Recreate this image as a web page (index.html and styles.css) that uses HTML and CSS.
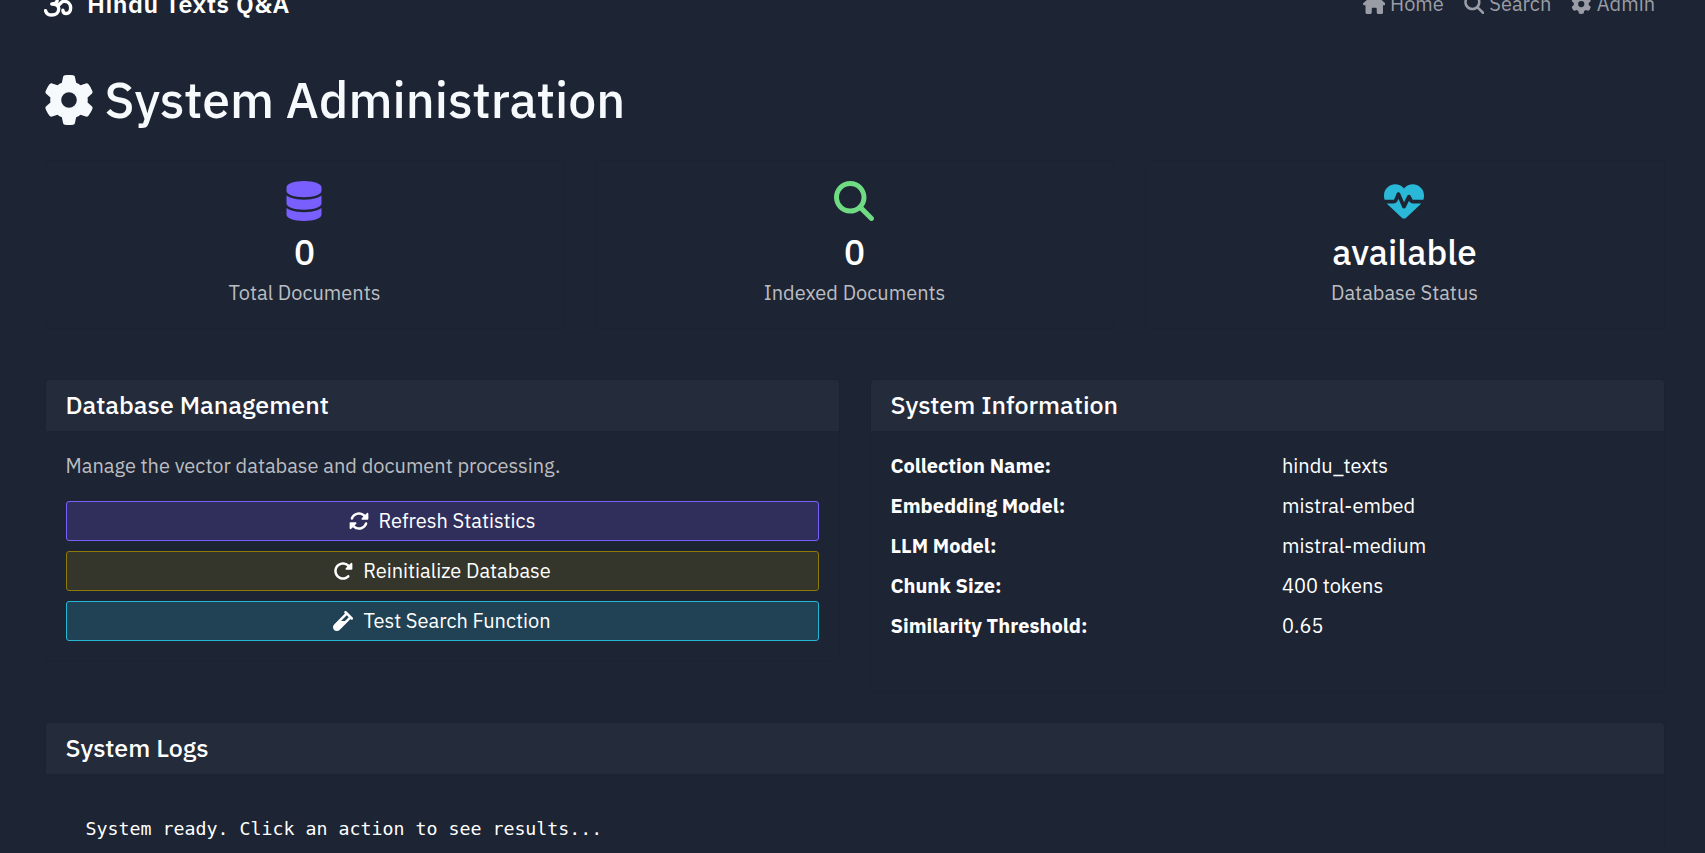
FILE: index.html
```html
<!DOCTYPE html>
<html lang="en">
<head>
<meta charset="utf-8">
<title>System Administration - Hindu Texts Q&amp;A</title>
<link rel="stylesheet" href="styles.css">
</head>
<body>
<svg class="sprite" aria-hidden="true">
  <symbol id="gear" viewBox="0 0 512 512"><path d="M495.9 166.6c3.2 8.7 .5 18.4-6.4 24.6l-43.3 39.4c1.1 8.3 1.7 16.8 1.7 25.4s-.6 17.1-1.7 25.4l43.3 39.4c6.9 6.2 9.6 15.9 6.4 24.6c-4.4 11.9-9.7 23.3-15.8 34.3l-4.7 8.1c-6.6 11-14 21.4-22.1 31.2c-5.9 7.2-15.7 9.6-24.5 6.8l-55.7-17.7c-13.4 10.3-28.2 18.9-44 25.4l-12.5 57.1c-2 9.1-9 16.3-18.2 17.8c-13.8 2.3-28 3.5-42.5 3.5s-28.7-1.2-42.5-3.5c-9.2-1.5-16.2-8.7-18.2-17.8l-12.5-57.1c-15.8-6.5-30.6-15.1-44-25.4L83.1 425.9c-8.8 2.8-18.6 .3-24.5-6.8c-8.1-9.8-15.5-20.2-22.1-31.2l-4.7-8.1c-6.1-11-11.4-22.4-15.8-34.3c-3.2-8.7-.5-18.4 6.4-24.6l43.3-39.4C64.6 273.1 64 264.6 64 256s.6-17.1 1.7-25.4L22.4 191.2c-6.9-6.2-9.6-15.9-6.4-24.6c4.4-11.9 9.7-23.3 15.8-34.3l4.7-8.1c6.6-11 14-21.4 22.1-31.2c5.9-7.2 15.7-9.6 24.5-6.8l55.7 17.7c13.4-10.3 28.2-18.9 44-25.4l12.5-57.1c2-9.1 9-16.3 18.2-17.8C227.3 1.2 241.5 0 256 0s28.7 1.2 42.5 3.5c9.2 1.5 16.2 8.7 18.2 17.8l12.5 57.1c15.8 6.5 30.6 15.1 44 25.4l55.7-17.7c8.8-2.8 18.6-.3 24.5 6.8c8.1 9.8 15.5 20.2 22.1 31.2l4.7 8.1c6.1 11 11.4 22.4 15.8 34.3zM256 336a80 80 0 1 0 0-160 80 80 0 1 0 0 160z"/></symbol>
  <symbol id="search" viewBox="0 0 512 512"><path d="M416 208c0 45.9-14.9 88.3-40 122.7L502.6 457.4c12.5 12.5 12.5 32.8 0 45.3s-32.8 12.5-45.3 0L330.7 376c-34.4 25.2-76.8 40-122.7 40C93.1 416 0 322.9 0 208S93.1 0 208 0S416 93.1 416 208zM208 352a144 144 0 1 0 0-288 144 144 0 1 0 0 288z"/></symbol>
  <symbol id="house" viewBox="0 0 576 512"><path d="M575.8 255.5c0 18-15 32.1-32 32.1l-32 0 .7 160.2c0 2.7-.2 5.4-.5 8.1l0 16.2c0 22.1-17.9 40-40 40l-16 0c-1.1 0-2.2 0-3.3-.1c-1.4 .1-2.8 .1-4.2 .1L416 512l-24 0c-22.1 0-40-17.9-40-40l0-24 0-64c0-17.7-14.3-32-32-32l-64 0c-17.7 0-32 14.3-32 32l0 64 0 24c0 22.1-17.9 40-40 40l-24 0-31.9 0c-1.5 0-3-.1-4.5-.2c-1.2 .1-2.4 .2-3.6 .2l-16 0c-22.1 0-40-17.9-40-40l0-112c0-.9 0-1.9 .1-2.8l0-69.7-32 0c-18 0-32-14-32-32.1c0-9 3-17 10-24L266.4 8c7-7 15-8 22-8s15 2 21 7L564.8 231.5c8 7 12 15 11 24z"/></symbol>
  <symbol id="database" viewBox="0 0 448 512"><path d="M448 80v48c0 44.2-100.3 80-224 80S0 172.2 0 128V80C0 35.8 100.3 0 224 0S448 35.8 448 80zM393.2 214.7c20.8-7.4 39.9-16.9 54.8-28.6V288c0 44.2-100.3 80-224 80S0 332.2 0 288V186.1c14.9 11.8 34 21.2 54.8 28.6C99.7 230.7 159.5 240 224 240s124.3-9.3 169.2-25.3zM0 346.1c14.9 11.8 34 21.2 54.8 28.6C99.7 390.7 159.5 400 224 400s124.3-9.3 169.2-25.3c20.8-7.4 39.9-16.9 54.8-28.6V432c0 44.2-100.3 80-224 80S0 476.2 0 432V346.1z"/></symbol>
  <symbol id="heartbeat" viewBox="0 0 512 512"><path d="M228.3 469.1L47.6 300.4c-4.2-3.9-8.2-8.1-11.9-12.4h87c22.6 0 43-13.6 51.7-34.5l10.5-25.2 49.3 109.5c3.8 8.5 12.1 14 21.4 14.1s17.8-5 22-13.3L320 253.7l1.7 3.4c9.5 19 28.9 31 50.1 31H476.3c-3.7 4.3-7.7 8.5-11.9 12.4L283.7 469.1c-7.5 7-17.4 10.9-27.7 10.9s-20.2-3.9-27.7-10.9zM503.7 240h-132c-3 0-5.8-1.7-7.2-4.4l-23.2-46.3c-4.1-8.1-12.4-13.3-21.5-13.3s-17.4 5.1-21.5 13.3l-41.4 82.8L205.9 158.2c-3.9-8.7-12.7-14.3-22.2-14.1s-18.1 5.9-21.8 14.8l-31.8 76.3c-1.2 3-4.2 4.9-7.4 4.9H16c-2.6 0-5 .4-7.3 1.1C3 225.2 0 208.2 0 190.9v-5.8c0-69.9 50.5-129.5 119.4-141C165 36.5 211.4 51.4 244 84l12 12 12-12c32.6-32.6 79-47.5 124.6-39.9C461.5 55.6 512 115.2 512 185.1v5.8c0 16.9-2.8 33.5-8.3 49.1z"/></symbol>
  <symbol id="sync" viewBox="0 0 512 512"><path d="M142.9 142.9c62.2-62.2 162.7-62.5 225.3-1L327 183c-6.9 6.9-8.9 17.2-5.2 26.2s12.5 14.8 22.2 14.8H472c13.3 0 24-10.7 24-24V72c0-9.7-5.8-18.5-14.8-22.2s-19.3-1.7-26.2 5.2L413.4 96.6c-87.6-86.5-228.7-86.2-315.8 1C73.2 122 55.6 150.7 44.8 181.4c-5.9 16.7 2.9 34.9 19.5 40.8s34.9-2.9 40.8-19.5c7.7-21.8 20.2-42.3 37.8-59.8zM16 312V440c0 9.7 5.8 18.5 14.8 22.2s19.3 1.7 26.2-5.2l41.6-41.6c87.6 86.5 228.7 86.2 315.8-1c24.4-24.4 42.1-53.1 52.9-83.7c5.9-16.7-2.9-34.9-19.5-40.8s-34.9 2.9-40.8 19.5c-7.7 21.8-20.2 42.3-37.8 59.8c-62.2 62.2-162.7 62.5-225.3 1L185 329c6.9-6.9 8.9-17.2 5.2-26.2s-12.5-14.8-22.2-14.8H40c-13.3 0-24 10.7-24 24z"/></symbol>
  <symbol id="redo" viewBox="0 0 512 512"><path d="M463.5 224H472c13.3 0 24-10.7 24-24V72c0-9.7-5.8-18.5-14.8-22.2s-19.3-1.7-26.2 5.2L413.4 96.6c-87.6-86.5-228.7-86.2-315.8 1c-87.5 87.5-87.5 229.3 0 316.8s229.3 87.5 316.8 0c12.5-12.5 12.5-32.8 0-45.3s-32.8-12.5-45.3 0c-62.5 62.5-163.8 62.5-226.3 0s-62.5-163.8 0-226.3c62.2-62.2 162.7-62.5 225.3-1L327 183c-6.9 6.9-8.9 17.2-5.2 26.2s12.5 14.8 22.2 14.8H463.5z"/></symbol>
  <symbol id="vial" viewBox="0 0 512 512"><path d="M342.6 9.4c-12.5-12.5-32.8-12.5-45.3 0s-12.5 32.8 0 45.3l9.4 9.4L28.1 342.6C10.1 360.6 0 385 0 410.5V416c0 53 43 96 96 96h5.5c25.5 0 49.9-10.1 67.9-28.1L448 205.3l9.4 9.4c12.5 12.5 32.8 12.5 45.3 0s12.5-32.8 0-45.3l-32-32-96-96-32-32zM205.3 256L352 109.3 402.7 160l-96 96H205.3z"/></symbol>
  <symbol id="om" viewBox="0 0 560 512"><g fill="none" stroke="currentColor" stroke-width="66" stroke-linecap="round" stroke-linejoin="round"><path d="M70 130c70-45 185-35 185 45 0 50-45 70-105 70 80 0 135 25 135 95 0 75-60 120-135 120-60 0-105-35-120-85"/><path d="M265 265c60 0 50-70 125-70 70 0 125 50 125 125 0 75-40 110-85 110-45 0-65-30-65-65"/><path d="M350 95c45 45 115 40 155-10"/></g><path d="M430 0l32 32-32 32-32-32z"/></symbol>
</svg>

<nav class="navbar">
  <a class="brand"><svg class="icon"><use href="#om"/></svg><span>Hindu Texts Q&amp;A</span></a>
  <div class="nav-links">
    <a class="nav-link"><svg class="icon icon-wide"><use href="#house"/></svg><span>Home</span></a>
    <a class="nav-link"><svg class="icon"><use href="#search"/></svg><span>Search</span></a>
    <a class="nav-link"><svg class="icon"><use href="#gear"/></svg><span>Admin</span></a>
  </div>
</nav>

<main class="page">
  <h1 class="title"><svg class="icon"><use href="#gear"/></svg><span>System Administration</span></h1>

  <section class="stats">
    <div class="card stat">
      <svg class="stat-icon purple"><use href="#database"/></svg>
      <h3 class="stat-value">0</h3>
      <p class="stat-label">Total Documents</p>
    </div>
    <div class="card stat">
      <svg class="stat-icon green"><use href="#search"/></svg>
      <h3 class="stat-value">0</h3>
      <p class="stat-label">Indexed Documents</p>
    </div>
    <div class="card stat">
      <svg class="stat-icon cyan"><use href="#heartbeat"/></svg>
      <h3 class="stat-value">available</h3>
      <p class="stat-label">Database Status</p>
    </div>
  </section>

  <section class="panels">
    <div class="card">
      <h5 class="card-header">Database Management</h5>
      <div class="card-body">
        <p class="lead">Manage the vector database and document processing.</p>
        <div class="actions">
          <button class="btn btn-purple"><svg class="icon"><use href="#sync"/></svg><span>Refresh Statistics</span></button>
          <button class="btn btn-olive"><svg class="icon"><use href="#redo"/></svg><span>Reinitialize Database</span></button>
          <button class="btn btn-cyan"><svg class="icon"><use href="#vial"/></svg><span>Test Search Function</span></button>
        </div>
      </div>
    </div>
    <div class="card">
      <h5 class="card-header">System Information</h5>
      <dl class="card-body info">
        <dt>Collection Name:</dt><dd>hindu_texts</dd>
        <dt>Embedding Model:</dt><dd>mistral-embed</dd>
        <dt>LLM Model:</dt><dd>mistral-medium</dd>
        <dt>Chunk Size:</dt><dd>400 tokens</dd>
        <dt>Similarity Threshold:</dt><dd>0.65</dd>
      </dl>
    </div>
  </section>

  <section class="card logs">
    <h5 class="card-header">System Logs</h5>
    <div class="card-body"><pre class="log-output">System ready. Click an action to see results...</pre></div>
  </section>
</main>
</body>
</html>
```
FILE: styles.css
```css
* { box-sizing: border-box; }

body {
  margin: 0;
  overflow: hidden;
  background: #1d2433;
  color: #fff;
  font-family: "IBM Plex Sans", "Noto Sans", sans-serif;
  font-size: 20px;
  line-height: 30px;
}

h1, h3, h5, p, dl, dd, pre { margin: 0; font-weight: 500; }
p, dd, pre { font-weight: 400; }

.sprite { position: absolute; width: 0; height: 0; }

.icon { width: 1em; height: 1em; fill: currentColor; flex: none; }

/* The bar is scrolled halfway past the top edge. */
.navbar {
  display: flex;
  justify-content: space-between;
  align-items: center;
  height: 60px;
  margin-top: -26px;
  padding: 0 50px 0 44px;
}

.brand { display: flex; align-items: center; gap: 14px; font-size: 25px; font-weight: 600; letter-spacing: 0.5px; }
.brand .icon { width: 29px; height: 27px; }

.nav-links { display: flex; gap: 20px; color: #9a9da5; }
.nav-link { display: flex; align-items: center; gap: 5px; }
.nav-link .icon { width: 20.5px; height: 20px; }
.nav-link .icon-wide { width: 22.5px; }

.page { padding: 36px 40.5px 0 44.5px; }

.title {
  display: flex;
  align-items: center;
  gap: 10.5px;
  height: 60px;
  margin: 0 0 30px -0.5px;
  color: #f7fafc;
  font-size: 50px;
  line-height: 60px;
}
.title .icon { width: 50px; height: 50px; }

.card { border: 1px solid #1b2230; border-radius: 4px; background: #1d2433; overflow: hidden; }

.stats { display: grid; grid-template-columns: repeat(3, 1fr); gap: 30px; }
.stat { display: flex; flex-direction: column; align-items: center; height: 169px; padding-top: 20px; }
.stat-icon { width: 40px; height: 40px; margin-right: 1px; fill: currentColor; }
.stat-value { margin-top: 10px; font-size: 35px; line-height: 42px; }
.stat-label { margin-top: 5px; color: #bbbdc1; }

.purple { color: #7a5fff; }
.green { color: #6fdb82; }
.cyan { color: #29b8d8; }

.panels { display: grid; grid-template-columns: repeat(2, 1fr); gap: 30px; align-items: start; margin-top: 50px; }

.card-header { height: 51px; padding: 10px 20px; background: #242b3a; font-size: 25px; }
.card-body { padding: 20px; }

.lead { margin-bottom: 20px; color: #bbbdc1; }

.actions { display: grid; gap: 10px; }
.btn {
  display: flex;
  justify-content: center;
  align-items: center;
  gap: 10px;
  height: 40px;
  padding: 0;
  border: 1px solid;
  border-radius: 3px;
  color: #fff;
  font: inherit;
}
.btn .icon { width: 20px; height: 20px; }
.btn-purple { background: #302f5c; border-color: #7a5fff; }
.btn-olive { background: #34352b; border-color: #8f7a05; }
.btn-cyan { background: #204254; border-color: #25b8d4; }

.info { display: grid; grid-template-columns: 391.5px 1fr; row-gap: 10px; padding-bottom: 50px; }
.info dt { font-weight: 700; }

/* The log panel continues below the fold. */
.logs { height: 130px; margin-top: 30px; border-bottom: 0; border-radius: 4px 4px 0 0; }
.logs .card-body { padding: 40px 40px 0; }
.log-output { font-family: Consolas, "DejaVu Sans Mono", monospace; font-size: 18.27px; line-height: 30px; }
```
